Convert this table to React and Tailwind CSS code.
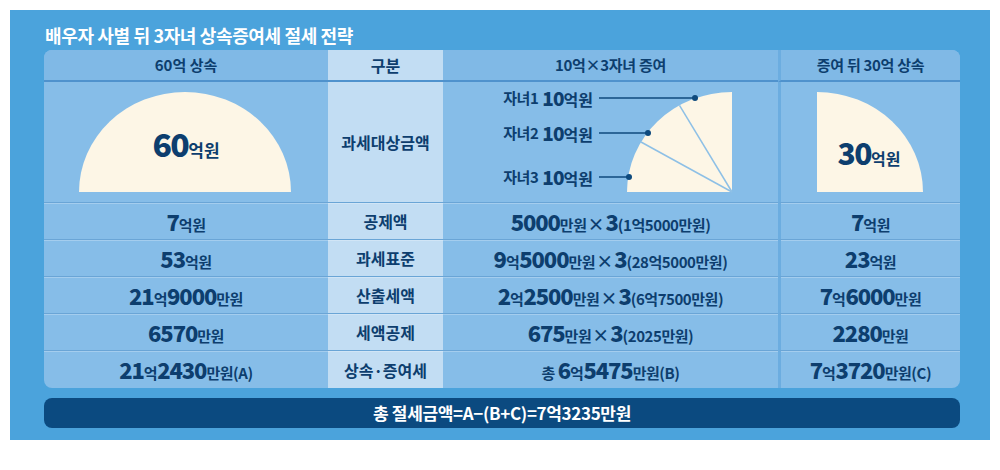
const FONT = { fontFamily: '"Noto Sans CJK KR", "Noto Sans", sans-serif' }

// value text is split into parts: n = big number, u = small unit, x = times sign
const rows = [
  {
    a: [['7', 'n'], ['억원', 'u']],
    k: '공제액',
    b: [['5000', 'n'], ['만원', 'u'], ['×', 'x'], ['3', 'n'], ['(1억5000만원)', 'u']],
    c: [['7', 'n'], ['억원', 'u']],
  },
  {
    a: [['53', 'n'], ['억원', 'u']],
    k: '과세표준',
    b: [['9', 'n'], ['억', 'u'], ['5000', 'n'], ['만원', 'u'], ['×', 'x'], ['3', 'n'], ['(28억5000만원)', 'u']],
    c: [['23', 'n'], ['억원', 'u']],
  },
  {
    a: [['21', 'n'], ['억', 'u'], ['9000', 'n'], ['만원', 'u']],
    k: '산출세액',
    b: [['2', 'n'], ['억', 'u'], ['2500', 'n'], ['만원', 'u'], ['×', 'x'], ['3', 'n'], ['(6억7500만원)', 'u']],
    c: [['7', 'n'], ['억', 'u'], ['6000', 'n'], ['만원', 'u']],
  },
  {
    a: [['6570', 'n'], ['만원', 'u']],
    k: '세액공제',
    b: [['675', 'n'], ['만원', 'u'], ['×', 'x'], ['3', 'n'], ['(2025만원)', 'u']],
    c: [['2280', 'n'], ['만원', 'u']],
  },
  {
    a: [['21', 'n'], ['억', 'u'], ['2430', 'n'], ['만원(A)', 'u']],
    k: '상속·증여세',
    b: [['총\u00a0', 'u'], ['6', 'n'], ['억', 'u'], ['5475', 'n'], ['만원(B)', 'u']],
    c: [['7', 'n'], ['억', 'u'], ['3720', 'n'], ['만원(C)', 'u']],
  },
]

function Val({ parts }) {
  return (
    <span className="inline-flex items-baseline font-bold text-[#0d3e6e] whitespace-pre">
      {parts.map(([t, k], i) => (
        <span
          key={i}
          className={
            k === 'n'
              ? 'text-[22px] font-black tracking-[-0.05em]'
              : k === 'x'
              ? 'text-[17px] mx-[1px]'
              : 'text-[15px] tracking-[-0.03em]'
          }
        >
          {t}
        </span>
      ))}
    </span>
  )
}

const cell = 'flex items-center justify-center border-b border-[#6aa5d6] shadow-[inset_0_1px_0_rgba(255,255,255,0.25)]'

export default function App() {
  return (
    <div className="w-[1000px] h-[470px] bg-white pt-[10px] px-[10px]" style={FONT}>
      <div className="w-[980px] h-[430px] bg-[#4ba3dc] pt-[14px] px-[34px]">
        <div className="h-[22px] mb-[4px] pl-[1px] text-[18px] leading-[22px] font-bold text-white tracking-[-0.02em]">
          배우자 사별 뒤 3자녀 상속증여세 절세 전략
        </div>

        <div className="w-[916px] rounded-lg overflow-hidden bg-[#86bde8] grid grid-cols-[284px_115px_335px_182px]">
          {/* header */}
          <div className="h-[32px] flex items-center justify-center bg-[#80b9e6] border-b-2 border-[#4f92cd] text-[15px] font-bold text-[#0d3e6e]">
            60억 상속
          </div>
          <div className="h-[32px] flex items-center justify-center bg-[#c2ddf3] border-b-2 border-[#4f92cd] text-[16px] font-bold text-[#0d3e6e]">
            구분
          </div>
          <div className="h-[32px] flex items-center justify-center bg-[#80b9e6] border-b-2 border-[#4f92cd] text-[15px] font-bold text-[#0d3e6e] tracking-[-0.02em]">
            10억×3자녀 증여
          </div>
          <div className="h-[32px] flex items-center justify-center bg-[#80b9e6] border-b-2 border-l-[3px] border-l-[#6cade0] border-b-[#4f92cd] text-[15px] font-bold text-[#0d3e6e] tracking-[-0.02em]">
            증여 뒤 30억 상속
          </div>

          {/* chart row */}
          <div className="relative h-[121px] border-b border-[#6aa5d6]">
            <svg width="284" height="120" className="absolute inset-0">
              <path d="M35 110 A106 100 0 0 1 247 110 Z" fill="#fdf6e6" />
            </svg>
            <div className="absolute left-0 right-0 top-[45px] flex justify-center">
              <span className="inline-flex items-baseline font-bold text-[#0d3e6e]">
                <span className="text-[32px] leading-none font-black tracking-[-0.05em]">60</span>
                <span className="text-[17px] leading-none">억원</span>
              </span>
            </div>
          </div>
          <div className="h-[121px] flex items-center justify-center bg-[#c2ddf3] border-b border-[#6aa5d6] text-[16px] font-bold text-[#0d3e6e]">
            과세대상금액
          </div>
          <div className="relative h-[121px] border-b border-[#6aa5d6]">
            <svg width="335" height="120" className="absolute inset-0">
              <path d="M289 110 L289 10 A105 100 0 0 0 184 110 Z" fill="#fdf6e6" />
              <line x1="289" y1="110" x2="236.5" y2="23.4" stroke="#8ec0e6" strokeWidth="1.5" />
              <line x1="289" y1="110" x2="198" y2="60" stroke="#8ec0e6" strokeWidth="1.5" />
              <line x1="156" y1="16" x2="252" y2="16" stroke="#0e4a7e" strokeWidth="1.5" />
              <line x1="156" y1="51" x2="205" y2="51" stroke="#0e4a7e" strokeWidth="1.5" />
              <line x1="156" y1="95" x2="186" y2="95" stroke="#0e4a7e" strokeWidth="1.5" />
              <circle cx="252" cy="16" r="3" fill="#0e4a7e" />
              <circle cx="205" cy="51" r="3" fill="#0e4a7e" />
              <circle cx="186" cy="95" r="3" fill="#0e4a7e" />
            </svg>
            {[
              ['자녀1', 'top-[4px]'],
              ['자녀2', 'top-[39px]'],
              ['자녀3', 'top-[83px]'],
            ].map(([n, t]) => (
              <div key={n} className={`absolute right-[185px] ${t} h-[24px] flex items-center gap-[4px] font-bold text-[#0d3e6e] whitespace-nowrap`}>
                <span className="text-[15px] tracking-[-0.03em]">{n}</span>
                <span className="inline-flex items-baseline">
                  <span className="text-[19px] font-black tracking-[-0.05em]">10</span>
                  <span className="text-[16px]">억원</span>
                </span>
              </div>
            ))}
          </div>
          <div className="relative h-[121px] border-b border-l-[3px] border-l-[#6cade0] border-b-[#6aa5d6]">
            <svg width="179" height="120" className="absolute inset-0">
              <path d="M36 110 L36 10 A106 100 0 0 1 142 110 Z" fill="#fdf6e6" />
            </svg>
            <div className="absolute left-[36px] w-[104px] top-[55px] flex justify-center">
              <span className="inline-flex items-baseline font-bold text-[#0d3e6e]">
                <span className="text-[30px] leading-none font-black tracking-[-0.05em]">30</span>
                <span className="text-[16px] leading-none">억원</span>
              </span>
            </div>
          </div>

          {/* value rows */}
          {rows.map((r, i) => {
            const last = i === rows.length - 1
            const b = last ? 'border-b-0' : ''
            return [
              <div key={`a${i}`} className={`h-[37px] ${cell} ${b}`}>
                <Val parts={r.a} />
              </div>,
              <div key={`k${i}`} className={`h-[37px] ${cell} ${b} bg-[#c2ddf3] text-[16px] font-bold text-[#0d3e6e]`}>
                {r.k}
              </div>,
              <div key={`b${i}`} className={`h-[37px] ${cell} ${b}`}>
                <Val parts={r.b} />
              </div>,
              <div key={`c${i}`} className={`h-[37px] ${cell} ${b} border-l-[3px] border-l-[#6cade0]`}>
                <Val parts={r.c} />
              </div>,
            ]
          })}
        </div>

        <div className="mt-[10px] w-[916px] h-[30px] rounded-lg bg-[#0b4a80] flex items-center justify-center text-[17px] font-bold text-white tracking-[-0.02em]">
          총 절세금액=A−(B+C)=7억3235만원
        </div>
      </div>
    </div>
  )
}
